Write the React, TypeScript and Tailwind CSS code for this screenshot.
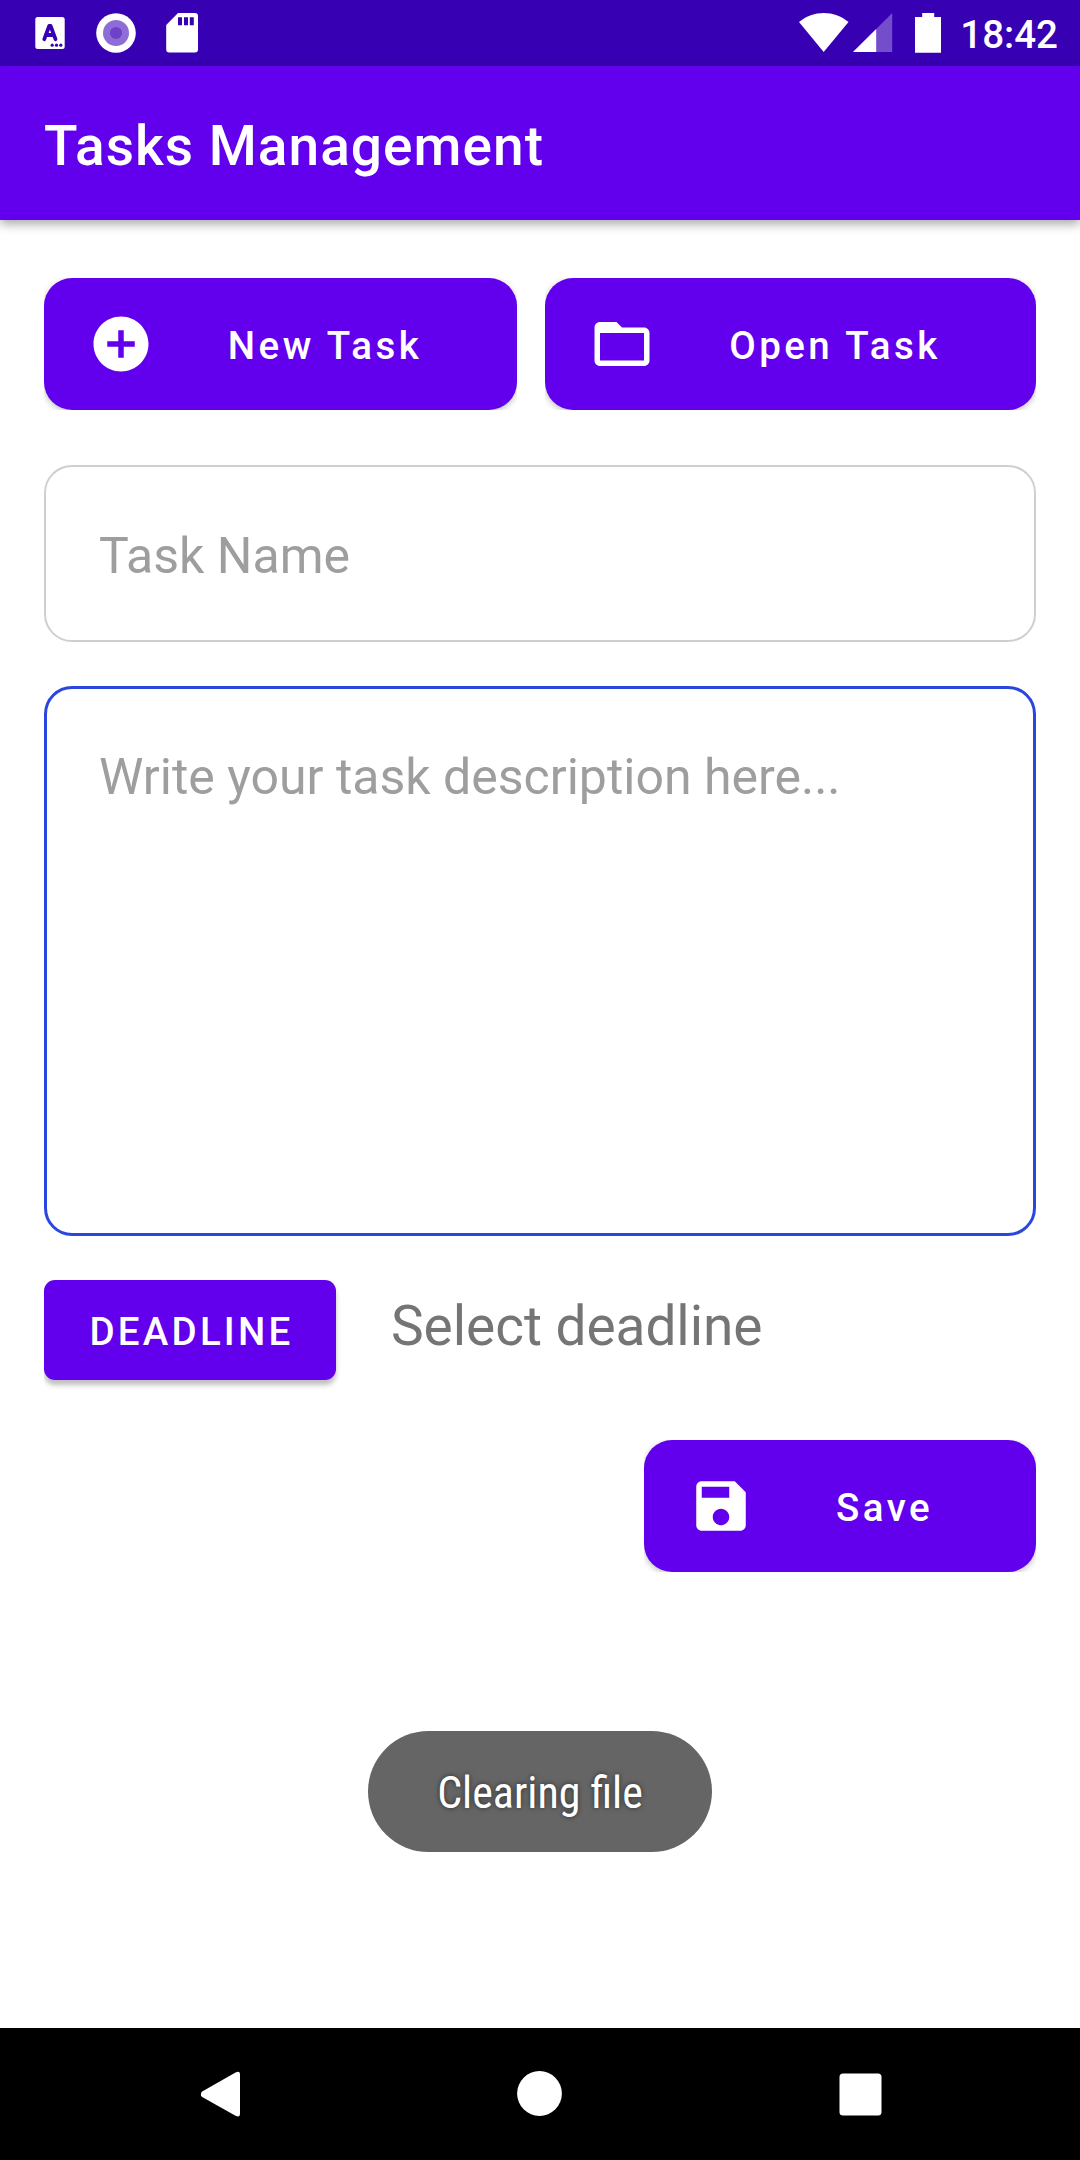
import type { ReactNode } from "react";

function StatusBar() {
  return (
    <div className="flex h-[66px] items-start justify-between bg-[#3700b3] text-white">
      <div className="flex pt-[13px] pl-[35px]">
        <svg width="30" height="40" viewBox="0 0 30 40">
          <rect x="0.3" y="4" width="29.4" height="32" rx="2.5" fill="#fff" />
          <path d="M9.300 26.200 14.200 13h1.400L20.500 26.200M11.500 22h7" fill="none" stroke="#3700b3" strokeWidth="3.800" strokeLinecap="round" strokeLinejoin="round" />
          <circle cx="17.200" cy="32.200" r="1.600" fill="#3700b3" />
          <circle cx="21.500" cy="32.200" r="1.600" fill="#3700b3" />
          <circle cx="25.800" cy="32.200" r="1.600" fill="#3700b3" />
        </svg>
        <svg className="ml-[31px]" width="40" height="40" viewBox="0 0 40 40">
          <circle cx="20" cy="20" r="19.800" fill="#fff" />
          <circle cx="20" cy="20" r="13" fill="#8f6dd6" />
          <circle cx="20" cy="20" r="6" fill="#6d41c8" />
        </svg>
        <svg className="ml-[30px]" width="32" height="40" viewBox="0 0 32 40">
          <path fillRule="evenodd" fill="#fff" d="M12 0h17a3 3 0 0 1 3 3v33.500a3 3 0 0 1-3 3H3.200a3 3 0 0 1-3-3V12zM12 4.300v8h4v-8zM18 4.300v8h4v-8zM23.800 4.300v8h4v-8z" />
        </svg>
      </div>
      <div className="flex pt-[13px] pr-[22px]">
        <svg width="50" height="40" viewBox="0 0 50 40">
          <path fill="#fff" d="M0 9C14.500-3 35-3 49.500 9L24.700 39z" />
        </svg>
        <svg className="ml-[4px]" width="40" height="39" viewBox="0 0 40 39">
          <path fill="#fff" fillOpacity="0.3" d="M39.200 0v39H0z" />
          <path fill="#fff" d="M23.200 16v23H0z" />
        </svg>
        <svg className="ml-[22px]" width="27" height="40" viewBox="0 0 27 40">
          <path fill="#fff" d="M7.200 0h12v4H26v35.800H0V4h7.200z" />
        </svg>
        <span className="ml-[18px] text-[38.5px] leading-[44px] font-medium">18:42</span>
      </div>
    </div>
  );
}

function IconButton({ icon, label, className }: { icon: ReactNode; label: string; className: string }) {
  return (
    <div className={`h-[132px] overflow-hidden ${className}`}>
      <button className="flex h-full w-full items-center rounded-[28px] bg-[#6200ee] pl-[44px] text-white shadow-[0_2px_6px_rgba(0,0,0,0.25)]">
        <svg width="66" height="66" viewBox="0 0 24 24" fill="#fff">{icon}</svg>
        <span className="flex-1 pt-1 pr-[21px] text-center text-[38.5px] font-medium tracking-[3.44px] whitespace-nowrap">{label}</span>
      </button>
    </div>
  );
}

export default function App() {
  return (
    <div className="flex h-[2160px] w-[1080px] flex-col overflow-hidden bg-white font-['Roboto',sans-serif]">
      <StatusBar />
      <header className="flex h-[154px] items-center bg-[#6200ee] px-[44px] pt-1.5 text-[55px] font-medium tracking-[1.03px] text-white shadow-[0_4px_10px_rgba(0,0,0,0.35)]">
        <h1>Tasks Management</h1>
      </header>

      <main className="flex flex-1 flex-col px-[44px] pt-[58px]">
        <div className="flex gap-7">
          <IconButton
            className="w-[473px]"
            label="New Task"
            icon={<path d="M12 2C6.480 2 2 6.480 2 12s4.480 10 10 10 10-4.480 10-10S17.520 2 12 2zm5 11h-4v4h-2v-4H7v-2h4V7h2v4h4v2z" />}
          />
          <IconButton
            className="w-[491px]"
            label="Open Task"
            icon={<path d="M20 6h-8l-2-2H4c-1.100 0-1.990.9-1.990 2L2 18c0 1.100.9 2 2 2h16c1.100 0 2-.9 2-2V8c0-1.100-.9-2-2-2zm0 12H4V8h16v10z" />}
          />
        </div>

        <div className="mt-[55px] flex h-[177px] items-center rounded-[28px] border-2 border-[#cfcfcf] pt-[5px] pl-[53px] text-[50px] text-[#9e9e9e]">
          Task Name
        </div>
        <div className="mt-[44px] h-[550px] rounded-[28px] border-3 border-[#2947e0] pt-[58px] pl-[52px] text-[50px] leading-[60px] text-[#9e9e9e]">
          Write your task description here...
        </div>

        <div className="mt-[44px] flex h-[116px] items-start overflow-hidden">
          <button className="flex h-[100px] w-[292px] items-center justify-center rounded-[11px] bg-[#6200ee] pt-1 pl-[3px] text-[38.5px] font-medium tracking-[3.2px] text-white shadow-[0_5px_5px_rgba(0,0,0,0.25)]">
            DEADLINE
          </button>
          <span className="mt-3 ml-[55px] text-[55px] leading-[68px] tracking-[-0.05px] text-[#757575]">Select deadline</span>
        </div>

        <div className="mt-[44px] flex justify-end">
          <IconButton
            className="w-[392px]"
            label="Save"
            icon={<path d="M17 3H5c-1.110 0-2 .9-2 2v14c0 1.100.89 2 2 2h14c1.100 0 2-.9 2-2V7l-4-4zm-5 16c-1.660 0-3-1.340-3-3s1.340-3 3-3 3 1.340 3 3-1.340 3-3 3zm3-10H5V5h10v4z" />}
          />
        </div>

        <div className="mt-[159px] flex h-[121px] w-[344px] items-center justify-center self-center rounded-full bg-[#656565] pt-0.5 text-white">
          <span className="text-[44px] font-normal whitespace-nowrap [font-stretch:75%] [text-shadow:0_0_5px_rgba(0,0,0,0.6)]">Clearing file</span>
        </div>
      </main>

      <nav className="flex h-[132px] justify-between bg-black pt-[43px] pr-[198px] pl-[201px]">
        <svg width="39" height="46" viewBox="0 0 39 46" fill="#fff">
          <path d="M1.200 20.500 34.500 1.500Q38.800-.5 39 3v40Q38.800 47 34.500 44.800L1.200 26Q-1.500 23.300 1.200 20.500z" />
        </svg>
        <svg width="45" height="46" viewBox="0 0 45 46" fill="#fff">
          <circle cx="22.500" cy="22.500" r="22.400" />
        </svg>
        <svg width="43" height="46" viewBox="0 0 43 46" fill="#fff">
          <rect x="0.500" y="2.500" width="42" height="42" rx="3.500" />
        </svg>
      </nav>
    </div>
  );
}
